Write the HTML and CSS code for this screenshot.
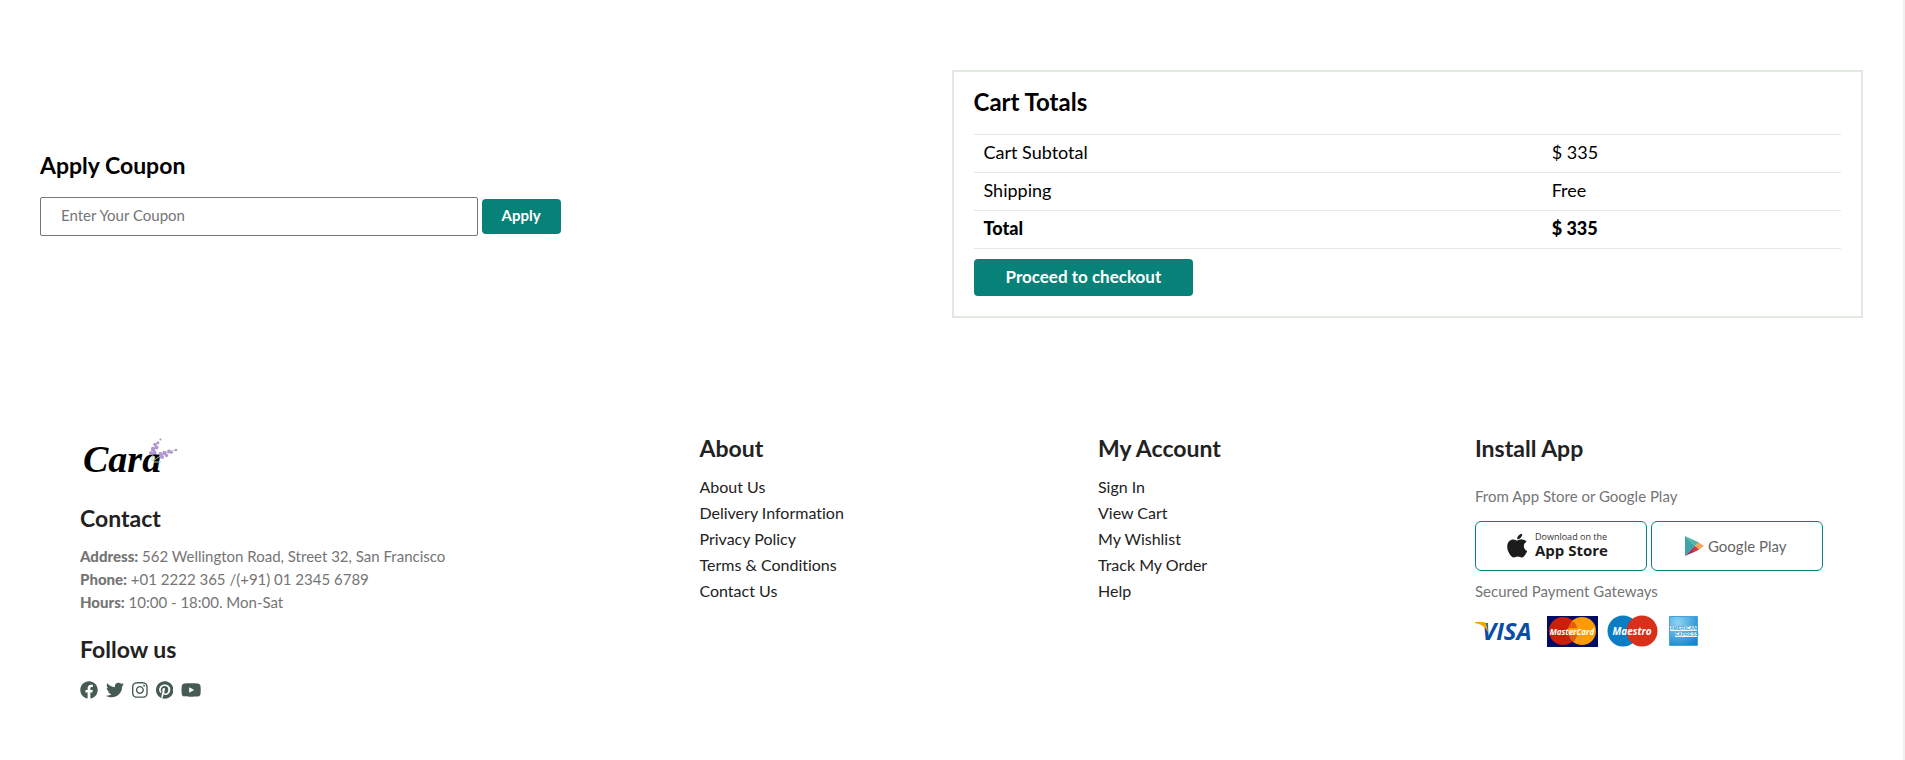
FILE: index.html
```html
<!DOCTYPE html>
<html lang="en">
<head>
<meta charset="utf-8">
<title>Cara - Cart</title>
<link rel="stylesheet" href="styles.css">
</head>
<body>
<main class="cart">
  <section class="coupon">
    <h3 class="heading">Apply Coupon</h3>
    <form class="coupon-form">
      <input class="coupon-input" type="text" placeholder="Enter Your Coupon" aria-label="Coupon code">
      <button class="btn btn-small" type="button">Apply</button>
    </form>
  </section>
  <section class="totals">
    <h3 class="heading">Cart Totals</h3>
    <table class="totals-table">
      <tr><td>Cart Subtotal</td><td class="amount">$ 335</td></tr>
      <tr><td>Shipping</td><td class="amount">Free</td></tr>
      <tr><td><strong>Total</strong></td><td class="amount"><strong>$ 335</strong></td></tr>
    </table>
    <button class="btn btn-large" type="button">Proceed to checkout</button>
  </section>
</main>

<footer class="footer">
  <div class="col">
    <svg class="logo" viewBox="0 0 100 40" role="img" aria-label="Cara">
      <text class="logo-text" x="3" y="34">Cara</text>
      <g fill="none" stroke="#a9d8a6" stroke-width="1"><path d="M72 23C72 19 74 12 78 3M73 23C77 20 84 15 95 12M74 24h7"/></g>
      <g fill="#b197d4">
        <circle cx="71" cy="15" r="2"/><circle cx="74.500" cy="14.500" r="2"/><circle cx="73" cy="11" r="2.200"/><circle cx="76.500" cy="9.500" r="2"/><circle cx="75" cy="6.500" r="1.800"/><circle cx="78" cy="5" r="1.400"/><circle cx="80.500" cy="1.500" r="1.100"/>
        <circle cx="80.500" cy="16" r="2"/><circle cx="82" cy="19" r="2"/><circle cx="84.500" cy="15" r="2.200"/><circle cx="86.500" cy="17.500" r="1.700"/><circle cx="89" cy="13.500" r="2"/><circle cx="91.500" cy="14.500" r="1.400"/><circle cx="96" cy="12" r="1.300"/>
      </g>
    </svg>
    <h4 class="heading contact-heading">Contact</h4>
    <p class="info"><strong>Address:</strong> 562 Wellington Road, Street 32, San Francisco</p>
    <p class="info"><strong>Phone:</strong> +01 2222 365 /(+91) 01 2345 6789</p>
    <p class="info"><strong>Hours:</strong> 10:00 - 18:00. Mon-Sat</p>
    <h4 class="heading follow-heading">Follow us</h4>
    <div class="social">
      <svg viewBox="0 0 512 512" role="img" aria-label="Facebook"><path d="M504 256C504 119 393 8 256 8S8 119 8 256c0 123.780 90.690 226.380 209.250 245V327.690h-63V256h63v-54.640c0-62.150 37-96.480 93.670-96.480 27.140 0 55.520 4.840 55.520 4.840v61h-31.280c-30.800 0-40.410 19.120-40.410 38.730V256h68.780l-11 71.690h-57.780V501C413.310 482.380 504 379.780 504 256z"/></svg>
      <svg viewBox="0 0 512 512" role="img" aria-label="Twitter"><path d="M459.370 151.716c.325 4.548.325 9.097.325 13.645 0 138.720-105.583 298.558-298.558 298.558-59.452 0-114.680-17.219-161.137-47.106 8.447.974 16.568 1.299 25.340 1.299 49.055 0 94.213-16.568 130.274-44.832-46.132-.975-84.792-31.188-98.112-72.772 6.498.974 12.995 1.624 19.818 1.624 9.421 0 18.843-1.300 27.614-3.573-48.081-9.747-84.143-51.980-84.143-102.985v-1.299c13.969 7.797 30.214 12.670 47.431 13.319-28.264-18.843-46.781-51.005-46.781-87.391 0-19.492 5.197-37.360 14.294-52.954 51.655 63.675 129.300 105.258 216.365 109.807-1.624-7.797-2.599-15.918-2.599-24.040 0-57.828 46.782-104.934 104.934-104.934 30.213 0 57.502 12.670 76.670 33.137 23.715-4.548 46.456-13.320 66.599-25.340-7.798 24.366-24.366 44.833-46.132 57.827 21.117-2.273 41.584-8.122 60.426-16.243-14.292 20.791-32.161 39.308-52.628 54.253z"/></svg>
      <svg viewBox="0 0 448 512" role="img" aria-label="Instagram"><path d="M224.100 141c-63.600 0-114.900 51.300-114.900 114.900s51.300 114.900 114.900 114.900S339 319.500 339 255.900 287.700 141 224.100 141zm0 189.600c-41.100 0-74.700-33.500-74.700-74.700s33.500-74.700 74.700-74.700 74.700 33.500 74.700 74.700-33.600 74.700-74.700 74.700zm146.400-194.300c0 14.900-12 26.800-26.800 26.800-14.900 0-26.800-12-26.800-26.800s12-26.800 26.800-26.800 26.800 12 26.800 26.800zm76.100 27.200c-1.700-35.900-9.900-67.700-36.200-93.900-26.200-26.200-58-34.400-93.900-36.200-37-2.100-147.900-2.100-184.900 0-35.800 1.700-67.600 9.900-93.900 36.100s-34.400 58-36.200 93.900c-2.100 37-2.100 147.900 0 184.900 1.700 35.900 9.900 67.700 36.200 93.900s58 34.400 93.900 36.200c37 2.100 147.900 2.100 184.900 0 35.900-1.700 67.700-9.900 93.900-36.200 26.200-26.200 34.400-58 36.200-93.900 2.100-37 2.100-147.800 0-184.800zM398.800 388c-7.800 19.600-22.900 34.700-42.600 42.600-29.500 11.700-99.500 9-132.100 9s-102.700 2.600-132.100-9c-19.600-7.800-34.700-22.900-42.600-42.600-11.700-29.500-9-99.500-9-132.100s-2.600-102.700 9-132.100c7.800-19.600 22.900-34.700 42.600-42.600 29.500-11.700 99.500-9 132.100-9s102.700-2.600 132.100 9c19.600 7.800 34.700 22.900 42.600 42.600 11.700 29.500 9 99.500 9 132.100s2.700 102.700-9 132.100z"/></svg>
      <svg viewBox="0 0 496 512" role="img" aria-label="Pinterest"><path d="M496 256c0 137-111 248-248 248-25.600 0-50.200-3.900-73.400-11.100 10.100-16.500 25.200-43.500 30.800-65 3-11.600 15.400-59 15.400-59 8.100 15.400 31.700 28.500 56.800 28.500 74.800 0 128.700-68.800 128.700-154.300 0-81.900-66.900-143.200-152.900-143.200-107 0-163.900 71.800-163.900 150.100 0 36.400 19.400 81.700 50.300 96.100 4.700 2.200 7.200 1.200 8.300-3.300.8-3.400 5-20.300 6.900-28.100.6-2.500.3-4.700-1.700-7.100-10.100-12.500-18.300-35.300-18.300-56.600 0-54.700 41.400-107.600 112-107.600 60.900 0 103.600 41.500 103.600 100.900 0 67.100-33.900 113.600-78 113.600-24.300 0-42.600-20.100-36.700-44.800 7-29.500 20.500-61.300 20.500-82.600 0-19-10.200-34.900-31.400-34.900-24.900 0-44.900 25.700-44.900 60.200 0 22 7.400 36.800 7.400 36.800s-24.500 103.800-29 123.200c-5 21.400-3 51.600-.9 71.200C65.400 450.900 0 361.100 0 256 0 119 111 8 248 8s248 111 248 248z"/></svg>
      <svg viewBox="0 0 576 512" role="img" aria-label="YouTube"><path d="M549.655 124.083c-6.281-23.650-24.787-42.276-48.284-48.597C458.781 64 288 64 288 64S117.220 64 74.629 75.486c-23.497 6.322-42.003 24.947-48.284 48.597-11.412 42.867-11.412 132.305-11.412 132.305s0 89.438 11.412 132.305c6.281 23.650 24.787 41.500 48.284 47.821C117.220 448 288 448 288 448s170.780 0 213.371-11.486c23.497-6.321 42.003-24.171 48.284-47.821 11.412-42.867 11.412-132.305 11.412-132.305s0-89.438-11.412-132.305zm-317.510 213.508V175.185l142.739 81.205-142.739 81.201z"/></svg>
    </div>
  </div>

  <nav class="col" aria-label="About">
    <h4 class="heading">About</h4>
    <a class="link" href="#">About Us</a>
    <a class="link" href="#">Delivery Information</a>
    <a class="link" href="#">Privacy Policy</a>
    <a class="link" href="#">Terms &amp; Conditions</a>
    <a class="link" href="#">Contact Us</a>
  </nav>

  <nav class="col" aria-label="My Account">
    <h4 class="heading">My Account</h4>
    <a class="link" href="#">Sign In</a>
    <a class="link" href="#">View Cart</a>
    <a class="link" href="#">My Wishlist</a>
    <a class="link" href="#">Track My Order</a>
    <a class="link" href="#">Help</a>
  </nav>

  <div class="col">
    <h4 class="heading">Install App</h4>
    <p class="info store-note">From App Store or Google Play</p>
    <div class="stores">
      <svg class="store" viewBox="0 0 170 48" role="img" aria-label="Download on the App Store">
        <path fill="#1c1c1c" transform="translate(31 10) scale(.053)" d="M318.700 268.700c-.2-36.700 16.400-64.400 50-84.800-18.800-26.900-47.200-41.700-84.700-44.600-35.500-2.800-74.300 20.700-88.500 20.700-15 0-49.400-19.700-76.400-19.700C63.300 141.200 4 184.800 4 273.500q0 39.300 14.400 81.200c12.800 36.700 59 126.700 107.200 125.200 25.200-.6 43-17.900 75.800-17.900 31.800 0 48.300 17.900 76.400 17.900 48.600-.7 90.400-82.500 102.600-119.300-65.200-30.700-61.700-90-61.700-91.900zm-56.600-164.200c27.300-32.400 24.800-61.900 24-72.500-24.100 1.400-52 16.400-67.900 34.900-17.500 19.800-27.800 44.300-25.600 71.900 26.100 2 49.900-11.400 69.500-34.300z"/>
        <text class="store-small" x="59" y="18">Download on the</text>
        <text class="store-big" x="59" y="34">App Store</text>
      </svg>
      <svg class="store" viewBox="0 0 170 48" role="img" aria-label="Google Play">
        <path fill="#3fa3ab" d="M33 14v20l10-10z"/><path fill="#55b3a4" d="M33 14l10 10 4-3.500z"/><path fill="#8e2a63" d="M33 34l10-10 4 3.500z"/><path fill="#d8393f" d="M43 24l4 3.500-8 4z"/><path fill="#f5a45a" d="M47 20.500 52 24l-5 3.500L43 24z"/>
        <text class="store-play" x="56" y="30">Google Play</text>
      </svg>
    </div>
    <p class="info pay-note">Secured Payment Gateways</p>
    <svg class="pay" viewBox="0 0 224 32" role="img" aria-label="Visa, MasterCard, Maestro, American Express">
      <text class="visa" x="7" y="25">VISA</text>
      <path fill="#f7a600" d="M0 7h8c2 0 3 1 3.500 3l2 8C11 12 6 9 0 8z"/>
      <path fill="#000c66" d="M72 1h51v31H72z"/>
      <circle cx="88" cy="16" r="14" fill="#cc1f08"/><circle cx="107" cy="16" r="14" fill="#ff9a00"/>
      <path stroke="#cc1f08" stroke-width="1" d="M94 8h6M93 10h8M93 12h9M93 21h9M93 23h8M94 25h6"/>
      <text class="card-name" x="97" y="20">MasterCard</text>
      <circle cx="148" cy="16" r="15.500" fill="#0a7dc4"/><circle cx="167" cy="16" r="15.500" fill="#d9301c"/>
      <path stroke="#d9301c" stroke-width="1" d="M155 7h5M153 9h8M153 11h9M153 22h9M153 24h8M155 26h5"/>
      <text class="card-name maestro" x="157" y="20">Maestro</text>
      <defs><radialGradient id="amex" cx=".3" cy=".2" r=".9"><stop offset="0" stop-color="#8fd4f3"/><stop offset="1" stop-color="#1787cf"/></radialGradient></defs>
      <path fill="url(#amex)" stroke="#4aa3d8" d="M194.500 1.500h28v29h-28z"/>
      <path fill="#eaf6fc" d="M195 11h27v5h-27zM200 17h22v5h-22z"/>
      <text class="amex" x="195" y="15">AMERICAN</text>
      <text class="amex" x="200" y="21">EXPRESS</text>
    </svg>
  </div>
</footer>
</body>
</html>
```
FILE: styles.css
```css
* { box-sizing: border-box; margin: 0; padding: 0; }

body {
  min-height: 100vh;
  border-right: 2px solid #f1f1f1;
  background: #fff;
  color: #000;
  font-family: Lato, "Open Sans", sans-serif;
  font-variant-ligatures: none;
}

.heading { font-size: 23px; line-height: 28px; font-weight: 700; }

.cart {
  display: flex;
  align-items: center;
  padding: 70px 40px;
}

.coupon { width: 50%; padding-bottom: 2px; }
.coupon-form { display: flex; align-items: center; gap: 4px; margin-top: 18px; }

.coupon-input {
  width: 48%;
  height: 39px;
  padding: 0 20px 3px;
  border: 1px solid #767676;
  border-radius: 2px;
  background: #fff;
  font: 15px/20px Lato, sans-serif;
}
.coupon-input::placeholder { color: #757575; }

.btn {
  border: 0;
  border-radius: 4px;
  background: #088178;
  color: #fff;
  font-family: inherit;
  font-weight: 700;
}
.btn-small { height: 35px; padding: 0 20px 2px; font-size: 15px; }
.btn-large { height: 37px; margin-top: 10px; padding: 0 32px 2px; font-size: 17px; }

.totals {
  width: 50%;
  padding: 16px 20px 20px;
  border: 2px solid #e2e9e1;
}
.totals .heading { font-size: 24px; }

.totals-table {
  width: 100%;
  margin-top: 18px;
  border-collapse: collapse;
  font-size: 18px;
  line-height: 21px;
}
.totals-table td { padding: 7px 10px 9px; border: solid #e2e9e1; border-width: 1px 0; }
.totals-table .amount { width: 34.5%; }
.totals-table strong { font-weight: 900; }

.footer {
  display: flex;
  justify-content: space-between;
  padding: 46px 80px;
  color: #222;
}

.col { display: flex; flex-direction: column; align-items: flex-start; }

.logo { width: 100px; height: 40px; margin-top: 4px; overflow: visible; }
.logo-text { font: italic 700 38px "Liberation Serif", serif; fill: #000; }
.contact-heading { margin: 26px 0 13px; }
.follow-heading { margin: 21px 0 18px; }

.info { color: #757575; font-size: 15px; line-height: 23px; }
.info strong { font-weight: 900; }

.social { display: flex; gap: 8px; fill: #465b52; }
.social svg { height: 18px; }

.link {
  margin-top: 5px;
  color: #222;
  font-size: 16px;
  line-height: 21px;
  text-decoration: none;
}
.heading + .link { margin-top: 14px; }

.store-note { margin: 23px 0 13px; }
.stores { display: flex; gap: 4px; }
.store { width: 172px; height: 50px; border: 1px solid #088178; border-radius: 6px; }
.store-small { font: 9px "Open Sans", sans-serif; fill: #333; }
.store-big { font: 700 15px "Open Sans", sans-serif; fill: #1c1c1c; }
.store-play { font: 15px Lato, sans-serif; fill: #666; }

.pay-note { margin: 9px 0 12px; }
.pay { width: 224px; height: 32px; }
.visa { font: italic 700 24px "Open Sans", sans-serif; fill: #0a4da2; }
.card-name { font: italic 700 8px "Open Sans", sans-serif; fill: #fff; text-anchor: middle; }
.card-name.maestro { font-size: 10px; }
.amex { font: 700 5px "Liberation Sans", sans-serif; fill: #3b9bd4; }
```
